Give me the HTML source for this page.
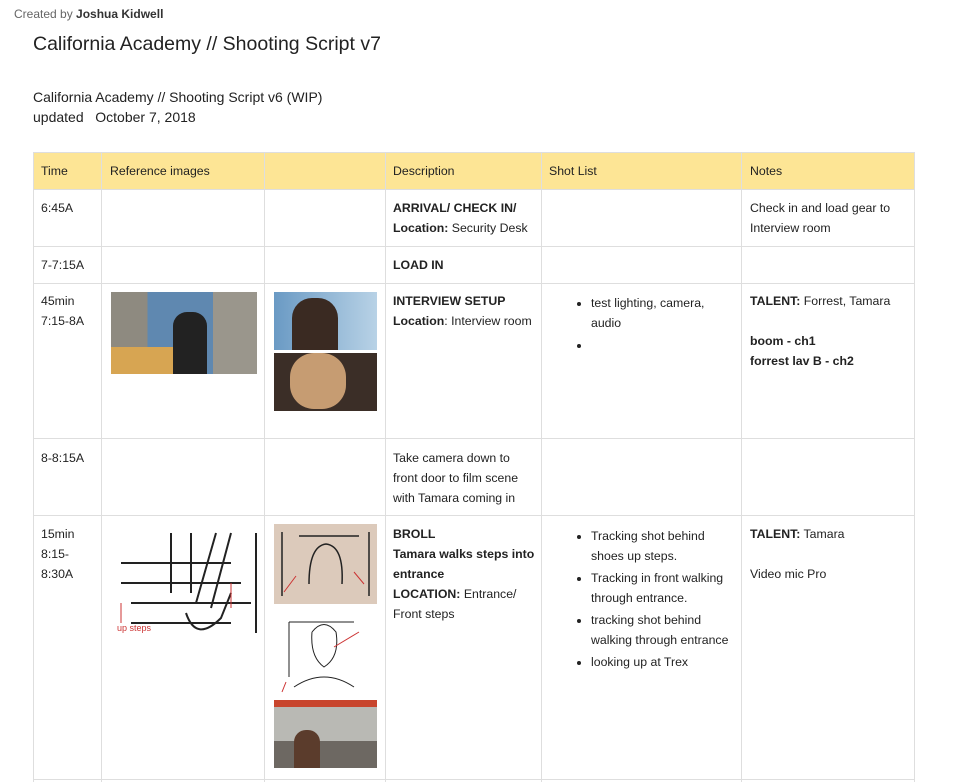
<!DOCTYPE html>
<html><head><meta charset="utf-8"><style>
*{margin:0;padding:0;box-sizing:border-box}
body{width:960px;height:781px;overflow:hidden;background:#fff;font-family:"Liberation Sans",Arial,sans-serif;color:#222;position:relative}
.a{position:absolute}
.t{font-size:12.3px;line-height:20px}
.h{background:#fde595}
.vl{position:absolute;width:1px;background:#dedede}
.hl{position:absolute;height:1px;background:#dedede}
b{font-weight:bold}
ul{list-style:disc;padding-left:18px}
li{font-size:12.3px;line-height:20px;margin-bottom:2px}
</style></head><body>
<div class="a" style="left:14px;top:7px;font-size:12px;color:#666">Created by <b style="color:#333">Joshua Kidwell</b></div>
<div class="a" style="left:33px;top:33px;font-size:19.5px;color:#222">California Academy // Shooting Script v7</div>
<div class="a" style="left:33px;top:87px;font-size:14px;line-height:20px">California Academy // Shooting Script v6 (WIP)<br>updated&nbsp;&nbsp; October 7, 2018</div>

<div class="a h" style="left:33px;top:152px;width:882px;height:37px"></div>
<div class="hl" style="left:33px;top:152px;width:882px"></div>
<div class="hl" style="left:33px;top:189px;width:882px"></div>
<div class="hl" style="left:33px;top:246px;width:882px"></div>
<div class="hl" style="left:33px;top:283px;width:882px"></div>
<div class="hl" style="left:33px;top:438px;width:882px"></div>
<div class="hl" style="left:33px;top:515px;width:882px"></div>
<div class="hl" style="left:33px;top:779px;width:882px"></div>
<div class="vl" style="left:33px;top:152px;height:630px"></div>
<div class="vl" style="left:101px;top:152px;height:630px"></div>
<div class="vl" style="left:264px;top:152px;height:630px"></div>
<div class="vl" style="left:385px;top:152px;height:630px"></div>
<div class="vl" style="left:541px;top:152px;height:630px"></div>
<div class="vl" style="left:741px;top:152px;height:630px"></div>
<div class="vl" style="left:914px;top:152px;height:630px"></div>

<div class="a t" style="left:41px;top:161px">Time</div>
<div class="a t" style="left:110px;top:161px">Reference images</div>
<div class="a t" style="left:393px;top:161px">Description</div>
<div class="a t" style="left:549px;top:161px">Shot List</div>
<div class="a t" style="left:750px;top:161px">Notes</div>

<div class="a t" style="left:41px;top:198px">6:45A</div>
<div class="a t" style="left:393px;top:198px"><b>ARRIVAL/ CHECK IN/</b><br><b>Location:</b> Security Desk</div>
<div class="a t" style="left:750px;top:198px">Check in and load gear to<br>Interview room</div>

<div class="a t" style="left:41px;top:255px">7-7:15A</div>
<div class="a t" style="left:393px;top:255px"><b>LOAD IN</b></div>

<div class="a t" style="left:41px;top:291px">45min<br>7:15-8A</div>
<div class="a t" style="left:393px;top:291px"><b>INTERVIEW SETUP</b><br><b>Location</b>: Interview room</div>
<div class="a" style="left:573px;top:293px;width:160px"><ul><li>test lighting, camera, audio</li><li>&nbsp;</li></ul></div>
<div class="a t" style="left:750px;top:291px"><b>TALENT:</b> Forrest, Tamara<br><br><b>boom - ch1</b><br><b>forrest lav B - ch2</b></div>

<div class="a" style="left:111px;top:292px;width:146px;height:82px;background:linear-gradient(90deg,#8e8a80 0 25%,#5f88b0 25% 70%,#9a968c 70%);"><div class="a" style="left:0;top:55px;width:70px;height:27px;background:#d7a552"></div><div class="a" style="left:62px;top:20px;width:34px;height:62px;background:#222;border-radius:14px 14px 0 0"></div></div>
<div class="a" style="left:274px;top:292px;width:103px;height:58px;background:linear-gradient(90deg,#6a9ac4,#b8d2e6)"><div class="a" style="left:18px;top:6px;width:46px;height:52px;background:#3a2a22;border-radius:20px 20px 0 0"></div></div>
<div class="a" style="left:274px;top:353px;width:103px;height:58px;background:#3b2e27"><div class="a" style="left:16px;top:0;width:56px;height:56px;background:#c69c72;border-radius:24px"></div></div>

<div class="a t" style="left:41px;top:448px">8-8:15A</div>
<div class="a t" style="left:393px;top:448px">Take camera down to<br>front door to film scene<br>with Tamara coming in</div>

<div class="a t" style="left:41px;top:524px">15min<br>8:15-<br>8:30A</div>
<div class="a t" style="left:393px;top:524px"><b>BROLL</b><br><b>Tamara walks steps into<br>entrance</b><br><b>LOCATION:</b> Entrance/<br>Front steps</div>
<div class="a" style="left:573px;top:526px;width:165px"><ul><li>Tracking shot behind shoes up steps.</li><li>Tracking in front walking through entrance.</li><li>tracking shot behind walking through entrance</li><li>looking up at Trex</li></ul></div>
<div class="a t" style="left:750px;top:524px"><b>TALENT:</b> Tamara<br><br>Video mic Pro</div>

<svg class="a" style="left:111px;top:523px" width="150" height="122"><g stroke="#222" stroke-width="2" fill="none"><path d="M10 40H120M10 60H130M20 80H140M20 100H120"/><path d="M60 10V70M80 10V70M105 10L85 80M120 10L100 85"/><path d="M75 90Q85 120 110 95L120 70"/><path d="M145 10V110"/></g><g stroke="#c33" fill="none"><path d="M10 80V100M120 60V85"/></g><text x="6" y="108" font-size="9" fill="#c33" font-family="Liberation Sans">up steps</text></svg>
<div class="a" style="left:274px;top:524px;width:103px;height:80px;background:#dccabb"><svg width="103" height="80"><g stroke="#222" fill="none" stroke-width="1.5"><path d="M8 8V72M95 8V72M25 12H85"/><path d="M35 60Q35 22 52 20Q70 22 68 60"/></g><path d="M10 68L22 52M90 60L80 48" stroke="#c33"/></svg></div>
<svg class="a" style="left:274px;top:607px" width="103" height="89"><g stroke="#222" fill="none"><path d="M15 15H80M15 15V70"/><path d="M38 25Q50 10 62 25Q66 50 50 60Q36 50 38 25"/><path d="M20 80Q50 60 80 80"/></g><path d="M60 40L85 25M12 75L8 85" stroke="#c33"/></svg>
<div class="a" style="left:274px;top:700px;width:103px;height:68px;background:linear-gradient(#c8452d 0 10%,#b9b9b4 10% 60%,#6d6862 60%)"><div class="a" style="left:20px;top:30px;width:26px;height:38px;background:#5b3c2c;border-radius:12px 12px 0 0"></div></div>
</body></html>
